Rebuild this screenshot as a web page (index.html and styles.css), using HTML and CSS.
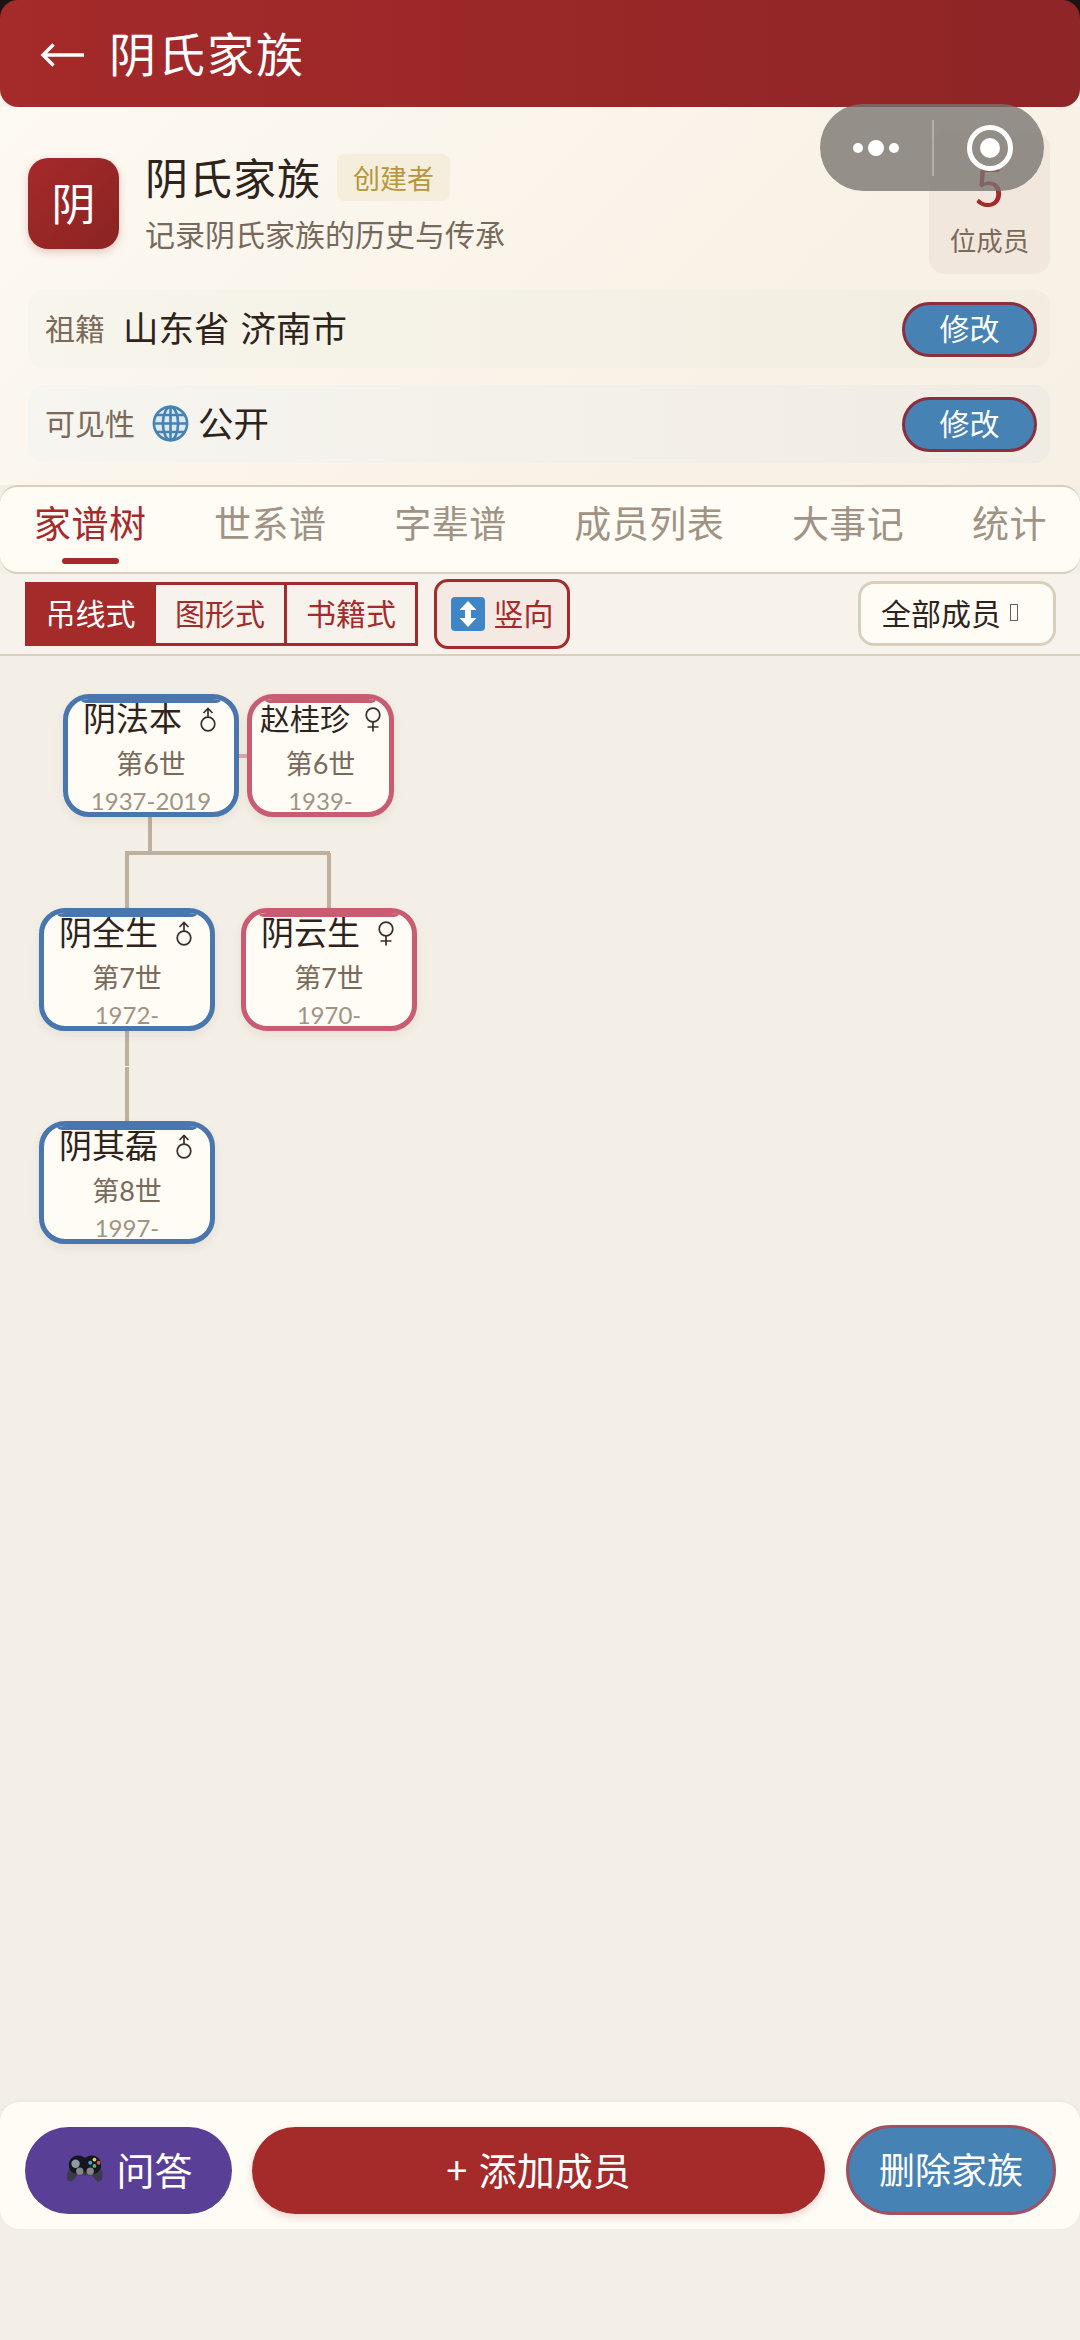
FILE: index.html
```html
<!DOCTYPE html>
<html lang="zh-CN">
<head>
  <meta charset="UTF-8">
  <meta name="viewport" content="width=device-width, initial-scale=1.0">
  <title>阴氏家族</title>
  <link rel="stylesheet" href="styles.css">
</head>
<body>

<div class="topbar-wrap">
  <header class="topbar">
    <svg class="back-icon" width="46" height="26" viewBox="0 0 46 26"><path d="M45 13H4M14.500 2.500 4 13l10.500 10.500" fill="none" stroke="#fff" stroke-width="3.400"/></svg>
    <span class="topbar-title">阴氏家族</span>
  </header>
</div>

<section class="info">
  <div class="info-head">
    <div class="avatar">阴</div>
    <div class="info-text">
      <div class="info-title">
        <span class="family-name">阴氏家族</span>
        <span class="role-badge">创建者</span>
      </div>
      <div class="info-desc">记录阴氏家族的历史与传承</div>
    </div>
    <div class="stats">
      <div class="stats-num">5</div>
      <div class="stats-label">位成员</div>
    </div>
  </div>
  <div class="info-row">
    <span class="row-label">祖籍</span>
    <span class="row-value">山东省 济南市</span>
    <button class="edit-btn">修改</button>
  </div>
  <div class="info-row">
    <span class="row-label">可见性</span>
    <svg class="globe" width="37" height="37" viewBox="0 0 37 37" fill="none" stroke="#4682B4" stroke-width="2.600">
      <circle cx="18.500" cy="18.500" r="16.600" fill="#DCE8F2"/>
      <ellipse cx="18.500" cy="18.500" rx="7.600" ry="16.600"/>
      <path d="M18.500 2v33M2 18.500h33M4.400 10h28.200M4.400 27h28.200"/>
    </svg>
    <span class="row-value">公开</span>
    <button class="edit-btn">修改</button>
  </div>
</section>

<nav class="tabs">
  <div class="tab tab-active">家谱树</div>
  <div class="tab">世系谱</div>
  <div class="tab">字辈谱</div>
  <div class="tab">成员列表</div>
  <div class="tab">大事记</div>
  <div class="tab">统计</div>
</nav>

<div class="toolbar">
  <div class="seg">
    <div class="seg-item seg-active">吊线式</div>
    <div class="seg-item">图形式</div>
    <div class="seg-item">书籍式</div>
  </div>
  <div class="dir-btn">
    <svg width="34" height="34" viewBox="0 0 34 34"><rect width="34" height="34" rx="4" fill="#3D87C8"/><path d="M17 4l8.500 9H20v8h5.500L17 30 8.500 21H14v-8H8.500z" fill="#fff"/></svg>
    <span>竖向</span>
  </div>
  <div class="filter-btn">全部成员<i class="tofu"></i></div>
</div>

<main class="tree">
  <div class="line line-v l1"></div>
  <div class="line line-h l2"></div>
  <div class="line line-v l3"></div>
  <div class="line line-v l4"></div>
  <div class="line line-v l5"></div>
  <div class="line line-v l6"></div>
  <div class="spouse-link"></div>

  <div class="node male n-fabe">
    <div class="node-name">阴法本<svg class="sex" width="16" height="25" viewBox="0 0 16 25"><use href="#male"/></svg></div>
    <div class="node-gen">第6世</div>
    <div class="node-date">1937-2019</div>
  </div>
  <div class="node female narrow n-guizhen">
    <div class="node-name">赵桂珍<svg class="sex" width="16" height="25" viewBox="0 0 16 25"><use href="#female"/></svg></div>
    <div class="node-gen">第6世</div>
    <div class="node-date">1939-</div>
  </div>
  <div class="node male n-quansheng">
    <div class="node-name">阴全生<svg class="sex" width="16" height="25" viewBox="0 0 16 25"><use href="#male"/></svg></div>
    <div class="node-gen">第7世</div>
    <div class="node-date">1972-</div>
  </div>
  <div class="node female n-yunsheng">
    <div class="node-name">阴云生<svg class="sex" width="16" height="25" viewBox="0 0 16 25"><use href="#female"/></svg></div>
    <div class="node-gen">第7世</div>
    <div class="node-date">1970-</div>
  </div>
  <div class="node male n-qilei">
    <div class="node-name">阴其磊<svg class="sex" width="16" height="25" viewBox="0 0 16 25"><use href="#male"/></svg></div>
    <div class="node-gen">第8世</div>
    <div class="node-date">1997-</div>
  </div>
</main>

<footer class="bottom-bar">
  <button class="btn-quiz">
    <svg width="42" height="32" viewBox="0 0 40 30">
      <path d="M3 20 9 7h22l6 13-1 7-4 1-6-6H13l-6 6-4-1z" fill="#3B3A4E"/>
      <path d="M5 9c2-5 6-6 9-6 3 0 4 2 6 2s3-2 6-2c3 0 7 1 9 6 1 4 0 8-3 10-3 2-5 2-8 0H16c-3 2-5 2-8 0-3-2-4-6-3-10z" fill="#15171F"/>
      <circle cx="11" cy="11" r="4" fill="#8E9AA0"/>
      <circle cx="15" cy="18" r="3.500" fill="#85858E"/>
      <circle cx="25" cy="18" r="3.500" fill="#85858E"/>
      <circle cx="29" cy="7" r="1.800" fill="#E5D34F"/>
      <circle cx="25" cy="10" r="1.800" fill="#4BA3E0"/>
      <circle cx="33" cy="10" r="1.800" fill="#D9584F"/>
      <circle cx="29" cy="13" r="1.800" fill="#5DB56A"/>
    </svg>
    <span>问答</span>
  </button>
  <button class="btn-add">+ 添加成员</button>
  <button class="btn-del">删除家族</button>
</footer>

<!-- wechat capsule -->
<div class="capsule">
  <div class="capsule-dots"><i></i><i class="big"></i><i></i></div>
  <div class="capsule-sep"></div>
  <div class="capsule-target"><i></i></div>
</div>

<svg width="0" height="0" class="defs">
  <symbol id="male" viewBox="0 0 16 25">
    <g fill="none" stroke="#3A2E26" stroke-width="1.700">
      <circle cx="8" cy="17" r="6.800"/>
      <path d="M8 10V1.500M3.500 6 8 1.500 12.500 6"/>
    </g>
  </symbol>
  <symbol id="female" viewBox="0 0 16 25">
    <g fill="none" stroke="#3A2E26" stroke-width="1.700">
      <circle cx="8" cy="8" r="6.800"/>
      <path d="M8 15v9.500M2.500 20h11"/>
    </g>
  </symbol>
</svg>

</body>
</html>
```

FILE: styles.css
```css
* {
  margin: 0;
  padding: 0;
  box-sizing: border-box;
}

body {
  width: 1080px;
  height: 2340px;
  overflow: hidden;
  position: relative;
  display: flex;
  flex-direction: column;
  font-family: "Noto Sans CJK SC", "Noto Sans", sans-serif;
  color: #2F241C;
  background-color: #F3EFE6;
}

button {
  font-family: inherit;
  border: none;
}

/* Top bar */
.topbar-wrap {
  background: linear-gradient(#1c1414 50%, #F9F5EC 50%);
}

.topbar {
  height: 107px;
  display: flex;
  align-items: center;
  gap: 24px;
  padding: 0 0 0 39px;
  border-radius: 18px;
  background: linear-gradient(90deg, #A52A2A, #8E2526);
  color: #fff;
}

.back-icon {
  margin-top: 2px;
}

.topbar-title {
  font-size: 47px;
  letter-spacing: 2px;
  padding-bottom: 5px;
}

/* Family info */
.info {
  height: 378px;
  padding: 25px 30px 23px 28px;
  background: linear-gradient(135deg, #FDFAF3, #F9F2E7 60%, #F6F0E5);
}

.info-head {
  display: flex;
  align-items: center;
  height: 142px;
  margin-bottom: 16px;
}

.avatar {
  width: 91px;
  height: 91px;
  padding-bottom: 2px;
  border-radius: 20px;
  display: flex;
  align-items: center;
  justify-content: center;
  font-size: 44px;
  color: #fff;
  background: linear-gradient(135deg, #A52A2A, #8B2323);
  box-shadow: 0 3px 8px rgba(165, 42, 42, 0.25);
}

.info-text {
  margin-left: 26px;
  flex: 1;
}

.info-title {
  display: flex;
  align-items: center;
  gap: 16px;
  margin-top: -2px;
  margin-bottom: 15px;
}

.family-name {
  font-size: 43px;
  line-height: 47px;
  letter-spacing: 1px;
  margin-top: -3px;
}

.role-badge {
  width: 113px;
  height: 47px;
  border-radius: 8px;
  display: flex;
  align-items: center;
  justify-content: center;
  font-size: 27px;
  color: #B8963E;
  background-color: #F5EEDD;
}

.info-desc {
  font-size: 30px;
  line-height: 34px;
  color: #76695C;
}

.stats {
  width: 121px;
  height: 142px;
  border-radius: 16px;
  background-color: #F2E7DD;
  display: flex;
  flex-direction: column;
  align-items: center;
}

.stats-num {
  margin-top: 22px;
  font-size: 52px;
  line-height: 60px;
  color: #A52A2A;
}

.stats-label {
  margin-top: 8px;
  font-size: 26.500px;
  line-height: 36px;
  color: #7A6A5A;
}

.info-row {
  display: flex;
  align-items: center;
  height: 78px;
  margin-bottom: 17px;
  padding: 0 13px 0 17px;
  border-radius: 16px;
  background: linear-gradient(90deg, #F7F5EC, #F2EDE0);
}

.info-row:last-child {
  margin-bottom: 0;
  background: linear-gradient(90deg, #F7F5F0, #F0ECE4);
}

.row-label {
  padding-bottom: 5px;
  font-size: 30px;
  color: #7A6A5A;
}

.row-value {
  margin-left: 18px;
  padding-bottom: 5px;
  font-size: 35.500px;
  word-spacing: 3px;
  color: #2F241C;
}

.globe {
  margin-left: 17px;
  margin-bottom: 1px;
}

.globe + .row-value {
  margin-left: 9px;
}

.edit-btn {
  margin-left: auto;
  width: 135px;
  height: 55px;
  padding-bottom: 4px;
  border-radius: 28px;
  border: 3px solid #8B2F3F;
  background-color: #4682B4;
  color: #fff;
  font-size: 30px;
}

/* Tabs */
.tabs {
  height: 89px;
  display: flex;
  gap: 67.600px;
  padding: 0 0 0 34px;
  border-top: 2px solid #D9CFBD;
  border-bottom: 2px solid #D9CFBD;
  border-radius: 18px;
  background-color: #FFFCF6;
}

.tab {
  position: relative;
  font-size: 37px;
  letter-spacing: 0.500px;
  line-height: 70px;
  color: #A09384;
}

.tab-active {
  color: #A52A2A;
}

.tab-active::after {
  content: '';
  position: absolute;
  left: 28px;
  bottom: 8px;
  width: 57px;
  height: 6px;
  border-radius: 3px;
  background-color: #A52A2A;
}

/* Toolbar */
.toolbar {
  height: 82px;
  display: flex;
  align-items: center;
  padding: 0 24px 1px 25px;
  border-bottom: 2px solid #D9CFBD;
  background-color: #F7F2EB;
}

.seg {
  display: flex;
  height: 64px;
}

.seg-item {
  width: 134px;
  padding-bottom: 3px;
  display: flex;
  align-items: center;
  justify-content: center;
  font-size: 30px;
  color: #A52A2A;
  border: 3px solid #A52A2A;
  margin-left: -3px;
}

.seg-item:first-child {
  width: 131px;
  margin-left: 0;
}

.seg-active {
  color: #fff;
  background-color: #A52A2A;
}

.dir-btn {
  margin-left: 16px;
  width: 136px;
  height: 70px;
  display: flex;
  align-items: center;
  justify-content: center;
  gap: 9px;
  border: 3px solid #A52A2A;
  border-radius: 14px;
  background-color: #F5E9E4;
  font-size: 30px;
  color: #A52A2A;
}

.dir-btn span {
  padding-bottom: 3px;
}

.filter-btn {
  margin-left: auto;
  width: 198px;
  height: 65px;
  display: flex;
  align-items: center;
  padding: 0 0 3px 20px;
  border: 3px solid #D9CFBD;
  border-radius: 16px;
  background-color: #FFFCF6;
  font-size: 30px;
  color: #2F241C;
}

.tofu {
  display: block;
  width: 8px;
  height: 17px;
  margin-left: 9px;
  border: 1px solid #6a6058;
}

/* Family tree diagram */
.tree {
  position: relative;
  flex: 1;
}

.node {
  position: absolute;
  width: 176px;
  height: 123px;
  overflow: hidden;
  display: flex;
  flex-direction: column;
  align-items: center;
  border: 5px solid;
  border-radius: 26px;
  background-color: #FFFCF6;
  box-shadow: 0 4px 10px rgba(90, 70, 50, 0.08);
}

.node::before {
  content: '';
  position: absolute;
  top: -5px;
  left: 12px;
  right: 12px;
  height: 9px;
  border-radius: 0 0 6px 6px;
}

.male {
  border-color: #4A76AE;
}

.male::before {
  background-color: #4A76AE;
}

.female {
  border-color: #C95C72;
}

.female::before {
  background-color: #C95C72;
}

.narrow {
  width: 147px;
}

.node-name {
  display: flex;
  align-items: center;
  gap: 18px;
  margin-top: -3px;
  font-size: 33px;
  line-height: 42px;
  white-space: nowrap;
}

.node-name .sex {
  margin-top: 5px;
  margin-right: 3px;
}

.narrow .node-name {
  font-size: 30px;
  gap: 15px;
}

.narrow .sex {
  margin-right: 0;
}

.node-gen {
  margin-top: 8px;
  font-family: Lato, "Noto Sans CJK SC", sans-serif;
  font-size: 27px;
  line-height: 36px;
  color: #7A6A5A;
}

.node-date {
  margin-top: 3px;
  font-family: Lato, "Noto Sans CJK SC", sans-serif;
  font-size: 24px;
  line-height: 32px;
  color: #A09384;
  white-space: nowrap;
}

.n-fabe { left: 63px; top: 38px; }
.n-guizhen { left: 247px; top: 38px; }
.n-quansheng { left: 39px; top: 252px; }
.n-yunsheng { left: 241px; top: 252px; }
.n-qilei { left: 39px; top: 465px; }

.line {
  position: absolute;
  background-color: #BDB09E;
}

.line-v {
  width: 4px;
}

.line-h {
  height: 4px;
}

.l1 { left: 148px; top: 161px; height: 36px; }
.l2 { left: 125px; top: 195px; width: 205px; }
.l3 { left: 125px; top: 197px; height: 55px; }
.l4 { left: 327px; top: 197px; height: 55px; }
.l5 { left: 125px; top: 375px; height: 35px; }
.l6 { left: 125px; top: 411px; height: 54px; }

.spouse-link {
  position: absolute;
  left: 239px;
  top: 98px;
  width: 9px;
  height: 4px;
  background-color: #D9A8B2;
}

/* Bottom actions */
.bottom-bar {
  height: 127px;
  margin-bottom: 111px;
  display: flex;
  align-items: center;
  padding: 9px 24px 0 25px;
  border-radius: 20px;
  background-color: #FFFCF6;
  box-shadow: 0 -1px 4px rgba(90, 70, 50, 0.05);
}

.bottom-bar button {
  height: 87px;
  padding-bottom: 4px;
  border-radius: 44px;
  color: #fff;
  font-size: 38px;
  word-spacing: 3px;
  display: flex;
  align-items: center;
  justify-content: center;
}

.btn-quiz {
  width: 207px;
  gap: 10px;
  background-color: #5A3F97;
}

.btn-add {
  width: 573px;
  margin-left: 20px;
  background-color: #A52A2A;
  box-shadow: 0 3px 8px rgba(165, 42, 42, 0.2);
}

.bottom-bar .btn-del {
  width: 210px;
  height: 90px;
  margin-left: 21px;
  border: 3px solid #A0505F;
  border-radius: 45px;
  background-color: #4682B4;
  font-size: 36px;
}

/* Capsule over the page */
.capsule {
  position: absolute;
  left: 820px;
  top: 104px;
  width: 224px;
  height: 87px;
  display: flex;
  align-items: center;
  border-radius: 44px;
  background-color: rgba(120, 115, 110, 0.78);
}

.capsule-dots {
  width: 112px;
  display: flex;
  align-items: center;
  justify-content: center;
  gap: 5px;
}

.capsule-dots i {
  width: 10px;
  height: 10px;
  border-radius: 50%;
  background-color: #fff;
}

.capsule-dots .big {
  width: 16px;
  height: 16px;
}

.capsule-sep {
  width: 2px;
  height: 56px;
  background-color: rgba(255, 255, 255, 0.3);
}

.capsule-target {
  width: 46px;
  height: 46px;
  margin-left: 33px;
  display: flex;
  align-items: center;
  justify-content: center;
  border: 5px solid #fff;
  border-radius: 50%;
}

.capsule-target i {
  width: 20px;
  height: 20px;
  border-radius: 50%;
  background-color: #fff;
}

.defs {
  position: absolute;
}
```
